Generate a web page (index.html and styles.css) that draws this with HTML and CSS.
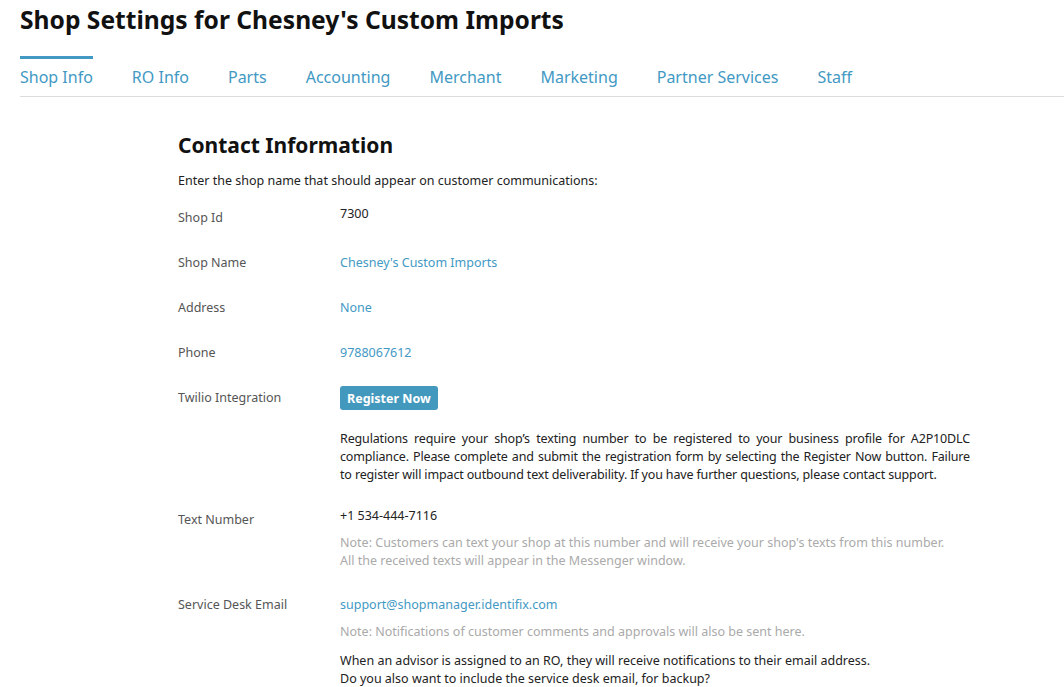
FILE: index.html
```html
<!DOCTYPE html>
<html>
<head>
<meta charset="utf-8">
<link rel="stylesheet" href="styles.css">
</head>
<body>
<div class="page">
  <h1 class="title">Shop Settings for Chesney's Custom Imports</h1>
  <nav class="tabs">
    <a class="tab active">Shop Info</a>
    <a class="tab">RO Info</a>
    <a class="tab">Parts</a>
    <a class="tab">Accounting</a>
    <a class="tab">Merchant</a>
    <a class="tab">Marketing</a>
    <a class="tab">Partner Services</a>
    <a class="tab">Staff</a>
  </nav>
  <section class="content">
    <h2 class="section-title">Contact Information</h2>
    <p class="intro">Enter the shop name that should appear on customer communications:</p>
    <div class="row">
      <div class="label">Shop Id</div>
      <div class="value plain raised">7300</div>
    </div>
    <div class="row">
      <div class="label">Shop Name</div>
      <div class="value link">Chesney's Custom Imports</div>
    </div>
    <div class="row">
      <div class="label">Address</div>
      <div class="value link">None</div>
    </div>
    <div class="row">
      <div class="label">Phone</div>
      <div class="value link">9788067612</div>
    </div>
    <div class="row twilio">
      <div class="label">Twilio Integration</div>
      <div class="value">
        <button class="btn">Register Now</button>
        <p class="reg">Regulations require your shop’s texting number to be registered to your business profile for A2P10DLC compliance. Please complete and submit the registration form by selecting the Register Now button. Failure to register will impact outbound text deliverability. If you have further questions, please contact support.</p>
      </div>
    </div>
    <div class="row textnum">
      <div class="label">Text Number</div>
      <div class="value">
        <div class="plain raised">+1 534-444-7116</div>
        <p class="note">Note: Customers can text your shop at this number and will receive your shop's texts from this number.<br>All the received texts will appear in the Messenger window.</p>
      </div>
    </div>
    <div class="row email">
      <div class="label">Service Desk Email</div>
      <div class="value">
        <div class="link">support@shopmanager.identifix.com</div>
        <p class="note">Note: Notifications of customer comments and approvals will also be sent here.</p>
        <p class="plain para">When an advisor is assigned to an RO, they will receive notifications to their email address.<br>Do you also want to include the service desk email, for backup?</p>
      </div>
    </div>
  </section>
</div>
</body>
</html>
```
FILE: styles.css
```css
* { box-sizing: border-box; }
html, body { margin: 0; padding: 0; background: #fff; }
body {
  font-family: "Noto Sans", "Liberation Sans", sans-serif;
  color: #222;
  overflow: hidden;
}
.page { padding: 0 0 0 20px; }
.title {
  margin: 0;
  padding-top: 4px;
  height: 46px;
  font-size: 24.6px;
  font-weight: 700;
  color: #111;
  line-height: 32px;
}
.tabs {
  display: flex;
  gap: 39px;
  border-bottom: 1px solid #dcdcdc;
  height: 41px;
  margin-top: 10px;
}
.tab {
  color: #4299c4;
  font-size: 16px;
  line-height: 20px;
  padding-top: 8px;
  border-top: 3px solid transparent;
}
.tab.active { border-top-color: #4299c4; }
.content {
  margin-left: 158px;
  width: 792px;
  padding-top: 33px;
}
.section-title {
  margin: 0;
  font-size: 21px;
  line-height: 30px;
  font-weight: 700;
  color: #111;
}
.intro {
  margin: 12px 0 0;
  font-size: 12.5px;
  line-height: 18px;
  color: #222;
}
.row {
  display: flex;
  min-height: 45px;
  font-size: 12.5px;
  line-height: 18px;
}
.row:nth-of-type(1) { margin-top: 19px; }
.label {
  width: 162px;
  flex: none;
  color: #555;
}
.value { flex: 1; }
.link { color: #4299c4; }
.plain { color: #222; }
.raised { margin-top: -4px; }
.btn {
  margin-top: -3px;
  background: #4398be;
  color: #fff;
  border: none;
  border-radius: 3px;
  font-family: inherit;
  font-size: 12.5px;
  font-weight: 700;
  height: 24px;
  padding: 0 7px;
  display: block;
}
.reg {
  margin: 20px 0 0;
  text-align: justify;
  color: #222;
  letter-spacing: -0.15px;
}
.twilio { min-height: 122px; }
.note { margin: 9px 0 0; color: #aaa; }
.textnum { min-height: 85px; }
.para { margin: 11px 0 0; }
```
